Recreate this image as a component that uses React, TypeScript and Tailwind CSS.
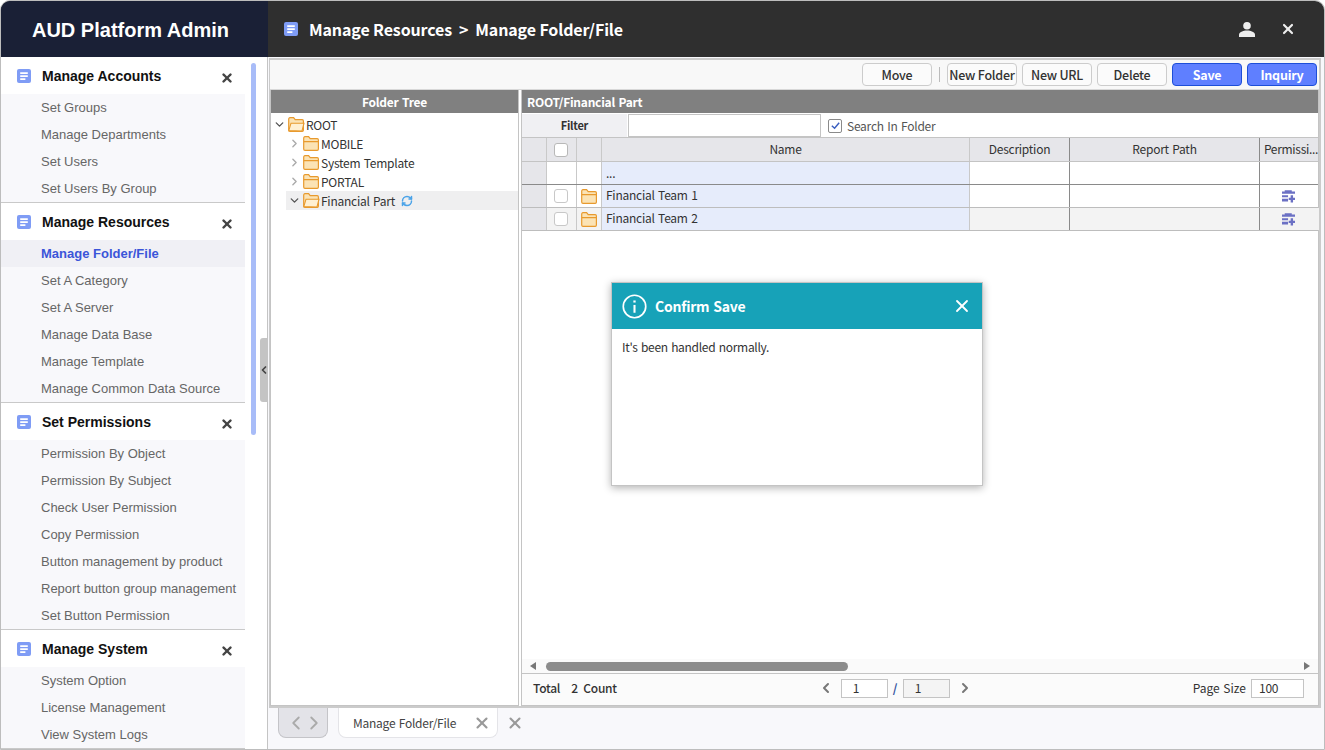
import { ChevronDown, ChevronLeft, ChevronRight, RefreshCw, X } from "lucide-react";

const menu = [
  { title: "Manage Accounts", items: ["Set Groups", "Manage Departments", "Set Users", "Set Users By Group"] },
  {
    title: "Manage Resources",
    items: ["Manage Folder/File", "Set A Category", "Set A Server", "Manage Data Base", "Manage Template", "Manage Common Data Source"],
  },
  {
    title: "Set Permissions",
    items: [
      "Permission By Object",
      "Permission By Subject",
      "Check User Permission",
      "Copy Permission",
      "Button management by product",
      "Report button group management",
      "Set Button Permission",
    ],
  },
  { title: "Manage System", items: ["System Option", "License Management", "View System Logs"] },
];

const kr = "font-['Noto_Sans_CJK_KR','Noto_Sans',sans-serif]";
const cols = "grid grid-cols-[25px_30px_25px_368px_100px_190px_59px]";

const DocIcon = ({ className = "" }: { className?: string }) => (
  <svg viewBox="0 0 14 14" className={className}>
    <rect width="14" height="14" rx="2" fill="#7f9cf5" />
    <path d="M3.2 3.2h7.6v1.8H3.2zM3.2 6.2h7.6V8H3.2zM3.2 9.2h5.2V11H3.2z" fill="#fff" />
  </svg>
);

const Folder = ({ open = false }: { open?: boolean }) => (
  <svg viewBox="0 0 17 15" className="h-[15px] w-[17px] shrink-0">
    <path d="M.7 13V2.2C.7 1.3 1.2.7 2 .7h3.6l1.6 2h7c.8 0 1.2.5 1.2 1.2V13c0 .8-.5 1.3-1.2 1.3H2c-.8 0-1.3-.5-1.3-1.3z" fill="#fbe3b5" stroke="#e89a2e" strokeWidth="1.2" />
    {open ? (
      <path d="M.8 13.6 3 6.2h13l-2 7.8z" fill="#fff0d2" stroke="#e89a2e" strokeWidth="1.1" />
    ) : (
      <path d="M.8 5.6h15" fill="none" stroke="#e89a2e" strokeWidth="1.1" />
    )}
  </svg>
);

const PermIcon = () => (
  <svg viewBox="0 0 12 12" className="h-[13px] w-[13px]">
    <path d="M2.5.2H9v1.2H2.5zM0 1.4h12v2H0zM0 4.8h5.6v2H0zM0 8h5.6v2.6H0zM8 4.8h2.2v2.4H12v2h-1.8v2.4H8V9.2H6.2v-2H8z" fill="#6b70c4" />
  </svg>
);

const Button = ({ label, primary = false }: { label: string; primary?: boolean }) => (
  <button
    className={
      primary
        ? "h-[23px] w-[70px] rounded-[4px] border border-[#1d4ed8] bg-[#5f7fff] pt-px text-[12.5px] font-bold text-white"
        : "h-[23px] w-[70px] whitespace-nowrap rounded-[4px] border border-[#cccccc] bg-[#fbfbfb] pt-px text-[12.5px] font-medium text-[#333]"
    }
  >
    {label}
  </button>
);

const TreeRow = ({ label, expanded = false, active = false, open = false }: { label: string; expanded?: boolean; active?: boolean; open?: boolean }) => (
  <div className={`ml-[15px] flex h-[19px] items-center ${active ? "bg-[#efeff0]" : ""}`}>
    <span className="flex w-[17px] shrink-0 justify-center">
      {expanded ? <ChevronDown size={13} strokeWidth={2.5} className="text-[#555]" /> : <ChevronRight size={13} strokeWidth={2.5} className="text-[#aaa]" />}
    </span>
    <Folder open={open || active} />
    <span className="ml-px text-[12px] text-[#333]">{label}</span>
    {active && <RefreshCw size={12} strokeWidth={3} className="ml-[6px] text-[#4aa3e8]" />}
  </div>
);

const Row = ({ name, shaded = false }: { name: string; shaded?: boolean }) => (
  <div className={`${cols} h-[23px] border-b border-[#bdbdbd] text-[12px] text-[#333]`}>
    <div className="border-r border-[#c9c9c9] bg-[#e6e6ea]" />
    <div className={`flex items-center justify-center border-r border-[#c9c9c9] pr-px ${shaded ? "bg-[#f3f3f3]" : ""}`}>
      <span className="h-[14px] w-[14px] rounded-[3px] border border-[#c8c8c8] bg-white" />
    </div>
    <div className={`flex items-center justify-center border-r border-[#c9c9c9] ${shaded ? "bg-[#f3f3f3]" : ""}`}>
      <Folder />
    </div>
    <div className="flex items-center border-r border-[#c9c9c9] bg-[#e6ecfb] pb-[3px] pl-[4px]">{name}</div>
    <div className={`border-r border-[#8a8a8a] ${shaded ? "bg-[#f3f3f3]" : ""}`} />
    <div className={`border-r border-[#8a8a8a] ${shaded ? "bg-[#f3f3f3]" : ""}`} />
    <div className={`flex items-center justify-center pr-[3px] ${shaded ? "bg-[#f3f3f3]" : ""}`}>
      <PermIcon />
    </div>
  </div>
);

export default function App() {
  return (
    <div className={`relative flex h-[750px] w-[1325px] flex-col overflow-hidden rounded-t-[10px] border border-[#bdbdbd] bg-white tracking-[-0.25px] [word-spacing:1px] ${kr}`}>
      {/* top bar */}
      <div className="flex h-[56px] shrink-0 items-center bg-[#2f2f2f]">
        <div className="flex h-full w-[267px] items-center justify-center bg-[#1a2036] pr-[8px] pt-[2px] font-['Liberation_Sans',sans-serif] text-[20px] font-bold tracking-normal text-white [word-spacing:0]">
          AUD Platform Admin
        </div>
        <DocIcon className="ml-[16px] h-[14px] w-[14px]" />
        <span className="ml-[11px] text-[16px] font-bold tracking-[-0.13px] text-white [word-spacing:0]">Manage Resources&nbsp; &gt; &nbsp;Manage Folder/File</span>
        <svg viewBox="0 0 16 15" className="ml-auto h-[15px] w-[16px]">
          <circle cx="8" cy="3.8" r="3.8" fill="#eee" />
          <path d="M0 15v-2.4C0 10 4 8.4 8 8.4s8 1.6 8 4.2V15z" fill="#eee" />
        </svg>
        <X size={16} strokeWidth={3.2} className="ml-[25px] mr-[28px] text-[#eee]" />
      </div>

      <div className="flex min-h-0 flex-1">
        {/* sidebar */}
        <div className="relative w-[267px] shrink-0 overflow-hidden border-r border-[#c4c4c4] bg-white font-['Liberation_Sans',sans-serif] tracking-normal [word-spacing:0]">
          {menu.map((group) => (
            <div key={group.title} className="w-[244px] border-b border-[#c9c9c9]">
              <div className="flex h-[37px] items-center pl-[16px]">
                <DocIcon className="h-[14px] w-[14px]" />
                <span className="ml-[11px] mt-[2px] text-[14px] font-bold text-[#111]">{group.title}</span>
                <X size={14} strokeWidth={4.2} className="ml-auto mr-[11px] mt-[5px] text-[#444]" />
              </div>
              {group.items.map((item) => (
                <div
                  key={item}
                  className={
                    item === "Manage Folder/File"
                      ? "flex h-[27px] items-center whitespace-nowrap bg-[#f0f0f5] pl-[40px] text-[13px] font-bold text-[#3b55d9]"
                      : "flex h-[27px] items-center whitespace-nowrap bg-[#f8f8fb] pl-[40px] text-[13px] text-[#666]"
                  }
                >
                  {item}
                </div>
              ))}
            </div>
          ))}
          <div className="absolute left-[250px] top-[6px] h-[372px] w-[5px] rounded-full bg-[#a8bcf8]" />
          <div className="absolute right-0 top-[281px] flex h-[64px] w-[7px] items-center justify-center rounded-l-[3px] bg-[#c4c4c4]">
            <ChevronLeft size={12} strokeWidth={3.5} className="shrink-0 text-[#444]" />
          </div>
        </div>

        {/* content */}
        <div className="flex min-w-0 flex-1 flex-col bg-[#f8f8fb]">
          <div className="ml-px mr-[3px] mt-px flex h-[650px] flex-col border-2 border-l border-[#cbcbcb] bg-white">
            <div className="flex h-[30px] shrink-0 items-center justify-end gap-[5px] border-b border-[#d8d8d8] bg-[#f8f8f8] pr-[2px]">
              <Button label="Move" />
              <span className="mx-[2px] h-[15px] w-px bg-[#bbb]" />
              <Button label="New Folder" />
              <Button label="New URL" />
              <Button label="Delete" />
              <Button label="Save" primary />
              <Button label="Inquiry" primary />
            </div>

            <div className="flex min-h-0 flex-1 gap-[2px]">
              {/* folder tree */}
              <div className="flex w-[249px] shrink-0 flex-col border border-t-0 border-[#c4c4c4]">
                <div className="flex h-[23px] shrink-0 items-center justify-center bg-[#808080] text-[12px] font-bold text-white">Folder Tree</div>
                <div className="pt-[2px]">
                  <div className="-ml-[15px]">
                    <TreeRow label="ROOT" expanded open />
                  </div>
                  <TreeRow label="MOBILE" />
                  <TreeRow label="System Template" />
                  <TreeRow label="PORTAL" />
                  <TreeRow label="Financial Part" expanded active />
                </div>
              </div>

              {/* file list */}
              <div className="flex min-w-0 flex-1 flex-col border border-t-0 border-[#c4c4c4]">
                <div className="flex h-[23px] shrink-0 items-center bg-[#808080] pl-[5px] text-[12px] font-bold text-white">ROOT/Financial Part</div>
                <div className="flex h-[24px] shrink-0 items-center pt-px">
                  <div className="flex h-full w-[105px] items-center justify-center bg-[#f0f0f3] text-[11px] font-bold text-[#333]">Filter</div>
                  <div className="ml-px h-[23px] w-[193px] border border-[#c4c4c4] bg-white" />
                  <span className="ml-[7px] flex h-[14px] w-[14px] items-center justify-center rounded-[2px] border border-[#8a8a8a] bg-white">
                    <svg viewBox="0 0 12 12" className="h-[11px] w-[11px]">
                      <path d="M2 6.2 5 9l5-6" fill="none" stroke="#3b5fc0" strokeWidth="1.6" />
                    </svg>
                  </span>
                  <span className="ml-[5px] text-[12px] text-[#555]">Search In Folder</span>
                </div>

                <div className={`${cols} h-[25px] shrink-0 border-y border-[#c4c4c4] bg-[#e6e6ea] text-[12px] text-[#333]`}>
                  <div className="border-r border-[#c9c9c9]" />
                  <div className="flex items-center justify-center border-r border-[#c9c9c9] pr-px">
                    <span className="h-[14px] w-[14px] rounded-[3px] border border-[#b8b8b8] bg-white" />
                  </div>
                  <div className="border-r border-[#c9c9c9]" />
                  <div className="flex items-center justify-center border-r border-[#c9c9c9] pb-px">Name</div>
                  <div className="flex items-center justify-center border-r border-[#8a8a8a] pb-px">Description</div>
                  <div className="flex items-center justify-center border-r border-[#8a8a8a] pb-px">Report Path</div>
                  <div className="flex items-center justify-center whitespace-nowrap pb-px pl-[3px] tracking-[-0.3px]">Permissi...</div>
                </div>
                <div className={`${cols} h-[23px] shrink-0 border-b border-[#8a8a8a] text-[12px] text-[#333]`}>
                  <div className="border-r border-[#c9c9c9] bg-[#e6e6ea]" />
                  <div className="border-r border-[#c9c9c9]" />
                  <div className="border-r border-[#c9c9c9]" />
                  <div className="flex items-center border-r border-[#c9c9c9] bg-[#e6ecfb] pl-[4px]">...</div>
                  <div className="border-r border-[#8a8a8a]" />
                  <div className="border-r border-[#8a8a8a]" />
                  <div />
                </div>
                <Row name="Financial Team 1" />
                <Row name="Financial Team 2" shaded />

                <div className="flex-1" />
                {/* horizontal scroll */}
                <div className="flex h-[14px] shrink-0 items-center bg-[#fafafa] px-[8px]">
                  <span className="h-0 w-0 border-y-[4px] border-r-[6px] border-y-transparent border-r-[#777]" />
                  <span className="ml-[10px] h-[9px] w-[302px] rounded-full bg-[#8c8c8c]" />
                  <span className="ml-auto h-0 w-0 border-y-[4px] border-l-[6px] border-y-transparent border-l-[#777]" />
                </div>
                <div className="flex h-[32px] shrink-0 items-center border-t border-[#c4c4c4] bg-[#fbfbfb] pb-[3px] text-[12px] text-[#333]">
                  <span className="ml-[11px] font-medium">Total</span>
                  <span className="ml-[11px] font-medium [word-spacing:3px]">2 Count</span>
                  <ChevronLeft size={16} strokeWidth={3} className="ml-[201px] text-[#777]" />
                  <span className="ml-[7px] flex h-[19px] w-[47px] items-center border border-[#c4c4c4] bg-white pl-[11px]">1</span>
                  <span className="mx-[5px] w-[5px] font-bold text-[#33539e]">/</span>
                  <span className="flex h-[19px] w-[47px] items-center border border-[#c4c4c4] bg-[#f4f4f4] pl-[11px]">1</span>
                  <ChevronRight size={16} strokeWidth={3} className="ml-[7px] text-[#777]" />
                  <span className="ml-auto tracking-normal">Page Size</span>
                  <span className="ml-[5px] mr-[14px] flex h-[19px] w-[53px] items-center border border-[#c4c4c4] bg-white pl-[7px]">100</span>
                </div>
              </div>
            </div>
          </div>

          {/* tab strip */}
          <div className="flex flex-1 items-start pl-[10px]">
            <div className="flex h-[30px] w-[50px] items-center justify-center rounded-b-[8px] border border-t-0 border-[#c4c4c8] bg-[#e3e3e8] pl-[3px]">
              <ChevronLeft size={22} strokeWidth={2} className="shrink-0 text-[#aaa]" />
              <ChevronRight size={22} strokeWidth={2} className="-ml-[4px] shrink-0 text-[#aaa]" />
            </div>
            <div className="ml-[10px] flex h-[30px] w-[160px] items-center rounded-b-[8px] border border-t-0 border-[#e4e4e8] bg-white pl-[14px] text-[12px] text-[#444]">
              Manage Folder/File
              <X size={18} strokeWidth={2.8} className="ml-auto mr-[6px] text-[#999]" />
            </div>
            <X size={18} strokeWidth={2.8} className="ml-[8px] mt-[6px] text-[#999]" />
          </div>
        </div>
      </div>

      {/* dialog */}
      <div className="absolute left-[610px] top-[281px] h-[204px] w-[372px] border border-[#c4c4c4] bg-white shadow-[0_2px_8px_rgba(0,0,0,0.3)]">
        <div className="flex h-[46px] items-center bg-[#17a2b8] pl-[10px] text-white">
          <svg viewBox="0 0 24 24" className="h-[25px] w-[25px]" fill="none" stroke="#fff" strokeWidth="1.6">
            <circle cx="12" cy="12" r="10.8" />
            <path d="M12 10.5v7.5" strokeWidth="2" />
            <path d="M12 6.2v2" strokeWidth="2.2" />
          </svg>
          <span className="ml-[8px] text-[14px] font-bold">Confirm Save</span>
          <X size={20} strokeWidth={2.2} className="ml-auto mr-[10px]" />
        </div>
        <div className="pl-[10px] pt-[9px] text-[12px] tracking-[-0.3px] text-[#333]">It's been handled normally.</div>
      </div>
    </div>
  );
}
